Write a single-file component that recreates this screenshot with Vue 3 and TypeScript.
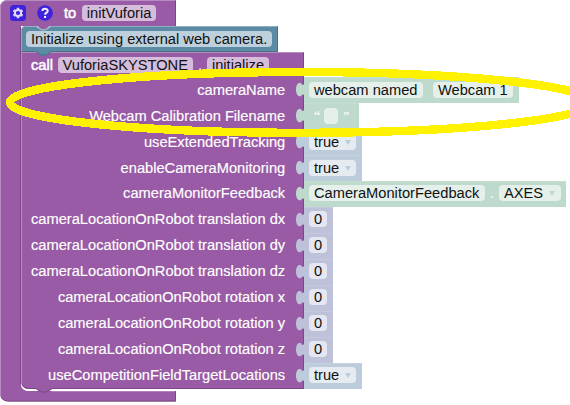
<script setup lang="ts">
type Tone = 'green' | 'blue' | 'violet'
type Kind = 'pair' | 'text' | 'bool' | 'enum' | 'number'
interface Row { label: string; tone: Tone; kind: Kind; a: string; b?: string }

const num = (label: string): Row => ({ label, tone: 'violet', kind: 'number', a: '0' })
const rows: Row[] = [
  { label: 'cameraName', tone: 'green', kind: 'pair', a: 'webcam named', b: 'Webcam 1' },
  { label: 'Webcam Calibration Filename', tone: 'green', kind: 'text', a: '' },
  { label: 'useExtendedTracking', tone: 'blue', kind: 'bool', a: 'true' },
  { label: 'enableCameraMonitoring', tone: 'blue', kind: 'bool', a: 'true' },
  { label: 'cameraMonitorFeedback', tone: 'green', kind: 'enum', a: 'CameraMonitorFeedback', b: 'AXES' },
  num('cameraLocationOnRobot translation dx'),
  num('cameraLocationOnRobot translation dy'),
  num('cameraLocationOnRobot translation dz'),
  num('cameraLocationOnRobot rotation x'),
  num('cameraLocationOnRobot rotation y'),
  num('cameraLocationOnRobot rotation z'),
  { label: 'useCompetitionFieldTargetLocations', tone: 'blue', kind: 'bool', a: 'true' },
]
</script>

<template>
  <main class="workspace">
    <svg class="shapes" width="570" height="405" viewBox="0 0 570 405" aria-hidden="true">
      <path class="purple" d="M0 8 Q0 0 8 0 H176 V26 H21 V383 Q21 391 29 391 H176 V401.5 H8 Q0 401.5 0 393 Z" />
      <path class="dark" d="M175.5 1 V26 M20.5 27 V384 M175.5 391 V401 H8 Q4 401 2 398" />
      <path class="light" d="M.5 394 V8 Q.5 .5 8 .5 H175 M52 391.3 H175" />
      <path class="gap" d="M21.7 384 Q22.5 390.3 29 390.3 H37 M51 390.3 H176" />
      <path class="purple" d="M21 52 H304 V389 H52 L47 392.5 H41 L36 389 H29 Q21 389 21 381 Z" />
      <path class="dark" d="M303.5 53 V388.5 H52 L46 392 H41 L36 388.5 H29 Q24 388.5 22.5 385" />
      <path class="light" d="M21.5 382 V52.5 H303" />
      <path class="teal" d="M21 31 Q21 26 26 26 H36 L41 29.5 H46 L51 26 H278 V52 H51 L46 55.5 H41 L36 52 H21 Z" />
      <path class="teal-light" d="M21.5 51 V31 Q21.5 26.5 26 26.5 H36 L41 30 H46 L51 26.5 H277" />
      <path class="teal-dark" d="M277.5 27 V51.5 H51 L46 55 H41 L36 51.5 H22" />
      <path class="purple" d="M36 25 H51 L46 29 H41 Z" />
    </svg>

    <section class="content">
      <header class="line header">
        <svg class="icon" width="16" height="16" viewBox="0 0 16 16">
          <rect width="16" height="16" rx="3.5" fill="#3f22dc" />
          <path d="M8 2.8V13.2M3.5 5.4L12.5 10.6M12.5 5.4L3.5 10.6" stroke="#e2d9fa" stroke-width="2.5" />
          <circle cx="8" cy="8" r="3.1" fill="#3f22dc" stroke="#e2d9fa" stroke-width="2" />
        </svg>
        <svg class="icon help" width="16" height="16" viewBox="0 0 16 16">
          <circle cx="8" cy="8" r="7.8" fill="#3f22dc" />
          <path d="M5.4 6.1C5.4 2.9 10.7 2.9 10.7 6C10.7 7.8 8.1 7.6 8.1 9.8" fill="none" stroke="#f2edff" stroke-width="2" />
          <rect x="7" y="11" width="2.1" height="2" fill="#f2edff" />
        </svg>
        <span class="word to">to</span>
        <span class="pill">initVuforia</span>
      </header>
      <div class="line comment"><span class="pill">Initialize using external web camera.</span></div>
      <div class="line call">
        <span class="word">call</span>
        <span class="pill">VuforiaSKYSTONE</span>
        <span class="dot">.</span>
        <span class="pill">initialize</span>
      </div>
      <div v-for="(row, i) in rows" :key="row.label" class="line row" :class="{ raised: i >= 4 }">
        <span class="label">{{ row.label }}</span>
        <svg class="tab" :class="row.tone" width="8" height="26" viewBox="0 0 8 26">
          <path d="M8 6 C8 9 5.5 8 5 6.3 C2 5 0 8 0 12.5 C0 17 2 20.3 5 19 C5.5 17.3 8 17 8 18 Z" />
        </svg>
        <div class="value" :class="[row.tone, row.kind]">
          <span v-if="row.kind === 'text'" class="quote">“</span>
          <span class="pill">{{ row.a }}<i v-if="row.kind === 'bool'" class="arrow" /></span>
          <span v-if="row.kind === 'text'" class="quote">”</span>
          <span v-if="row.kind === 'enum'" class="dot">.</span>
          <span v-if="row.b" class="pill">{{ row.b }}<i v-if="row.kind === 'enum'" class="arrow" /></span>
        </div>
      </div>
    </section>

    <svg class="marker" width="570" height="405" viewBox="0 0 570 405" aria-hidden="true">
      <ellipse cx="300.5" cy="102.4" rx="290.5" ry="30.4" />
    </svg>
  </main>
</template>

<style>
body { margin: 0; background: #fff; }
</style>

<style scoped>
.workspace { position: relative; width: 570px; height: 405px; overflow: hidden; background: #fff; font: 14.667px/16px "Liberation Sans", Arial, sans-serif; }
.shapes, .marker { position: absolute; left: 0; top: 0; }
.marker ellipse { fill: none; stroke: #fff200; stroke-width: 8.4; shape-rendering: crispEdges; }
.purple { fill: #995ba5; }
.teal { fill: #5b8ba5; }
.dark, .light, .gap, .teal-light, .teal-dark { fill: none; stroke-width: 1; }
.dark { stroke: #7a4984; }
.light { stroke: #b88cc0; }
.gap { stroke: #fff; stroke-width: 1.6; }
.teal-light { stroke: #8caec0; }
.teal-dark { stroke: #496f84; }
.content { position: relative; display: flex; flex-direction: column; }
.line { display: flex; height: 26px; box-sizing: border-box; align-items: flex-start; padding-top: 5px; white-space: nowrap; }
.header { padding-left: 10px; }
.comment { padding-left: 26px; }
.call { height: 25px; padding-left: 31px; }
.icon { flex: none; }
.help { margin-left: 11px; }
.word { color: #fff; -webkit-text-stroke: .5px #fff; margin-right: 4.5px; }
.to { margin-left: 11px; margin-right: 5.5px; }
.pill { display: flex; box-sizing: border-box; height: 15.7px; padding: 0 5px; border-radius: 4px; background: rgba(255, 255, 255, .6); color: #111; }
.dot { width: 14px; text-align: center; color: #fff; }
.row { padding-top: 0; }
.label { width: 285.2px; padding-top: 5px; text-align: right; color: #fff; -webkit-text-stroke: .15px #fff; }
.tab { margin-left: 10.8px; flex: none; }
.tab.green { fill: #bddacc; }
.tab.blue { fill: #bdccda; }
.tab.violet { fill: #bdc1da; }
.value { display: flex; height: 26px; box-sizing: border-box; padding: 5px 5.5px 0 5px; box-shadow: inset 0 1px rgba(255, 255, 255, .12); }
.raised .label, .raised .value { padding-top: 4.4px; }
.raised .pill { height: 16px; }
.value.green { background: #bddacc; }
.value.blue { background: #bdccda; }
.value.violet { background: #bdc1da; }
.pair { gap: 10px; }
.pair .pill { padding-right: 5.5px; }
.enum .pill { padding-right: 5.6px; }
.value.text { width: 55px; padding: 5px 0 0 10px; }
.text .pill { width: 14px; padding: 0; }
.quote { width: 5px; color: #f4faf7; font-family: "Liberation Serif", serif; font-weight: 700; font-size: 13px; }
.quote:first-child { margin-right: 5px; }
.quote:last-child { margin-left: 5px; }
.arrow { width: 0; height: 0; margin: 5.5px 0 0 6px; border: 3.2px solid transparent; border-top: 5px solid #bdccda; border-bottom: 0; }
.green .arrow { border-top-color: #bddacc; }
</style>
